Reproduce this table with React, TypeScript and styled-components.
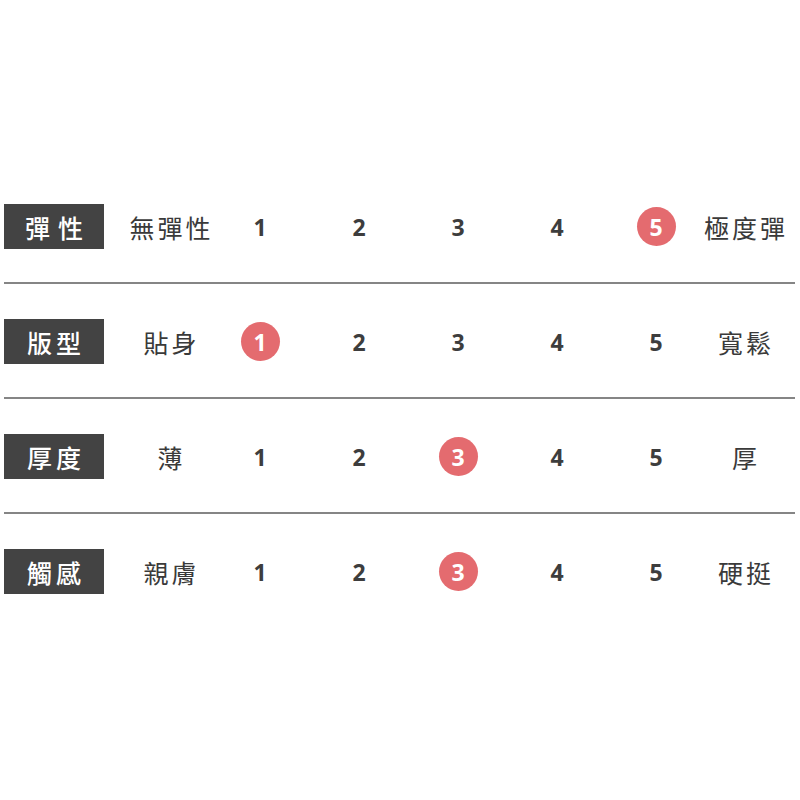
import * as React from 'react';
import styled, { createGlobalStyle } from 'styled-components';

const GlobalStyle = createGlobalStyle`
  html, body {
    margin: 0;
    padding: 0;
    background: #ffffff;
    overflow: hidden;
  }
`;

const Table = styled.div`
  display: flex;
  flex-direction: column;
  width: 800px;
  box-sizing: border-box;
  padding: 204px 5px 0 4px;
`;

const Row = styled.div`
  display: flex;
  align-items: center;
  height: 45px;
`;

const Divider = styled.div`
  height: 2px;
  background: #858585;
  margin: 33px 0 35px;
`;

const Label = styled.div<{ $spaced?: boolean }>`
  width: 100px;
  height: 45px;
  flex-shrink: 0;
  display: flex;
  align-items: center;
  justify-content: center;
  background: #434343;
  color: #ffffff;
  font-family: "Noto Sans CJK TC", "Noto Sans", sans-serif;
  font-weight: 500;
  font-size: 25px;
  letter-spacing: ${(p) => (p.$spaced ? '8px' : '4px')};
  text-indent: ${(p) => (p.$spaced ? '8px' : '4px')};
`;

const EndText = styled.div<{ $right?: boolean }>`
  width: ${(p) => (p.$right ? 'auto' : '132px')};
  flex: ${(p) => (p.$right ? '1' : '0 0 auto')};
  padding-left: ${(p) => (p.$right ? '14px' : '0')};
  text-align: center;
  color: #3a3a3a;
  font-family: "Noto Sans CJK TC", "Noto Sans", sans-serif;
  font-size: 25px;
  letter-spacing: 3px;
  text-indent: 3px;
  white-space: nowrap;
`;

const Scale = styled.div`
  display: flex;
  align-items: center;
  gap: 51px;
`;

const Step = styled.div<{ $active: boolean }>`
  width: 39px;
  height: 39px;
  margin: 0 4.5px;
  border-radius: 50%;
  display: flex;
  align-items: center;
  justify-content: center;
  background: ${(p) => (p.$active ? '#e46b6f' : 'transparent')};
  color: ${(p) => (p.$active ? '#ffffff' : '#3d3d3d')};
  font-family: "Open Sans", Lato, sans-serif;
  font-weight: 700;
  font-size: 23px;
`;

interface IRating {
  label: string;
  spaced?: boolean;
  min: string;
  max: string;
  value: number;
}

const ratings: IRating[] = [
  { label: '彈性', spaced: true, min: '無彈性', max: '極度彈', value: 5 },
  { label: '版型', min: '貼身', max: '寬鬆', value: 1 },
  { label: '厚度', min: '薄', max: '厚', value: 3 },
  { label: '觸感', min: '親膚', max: '硬挺', value: 3 },
];

export default function App() {
  return (
    <>
      <GlobalStyle />
      <Table>
        {ratings.map((r, i) => (
          <React.Fragment key={r.label}>
            {i > 0 ? <Divider /> : null}
            <Row>
              <Label $spaced={r.spaced}>{r.label}</Label>
              <EndText>{r.min}</EndText>
              <Scale>
                {[1, 2, 3, 4, 5].map((n) => (
                  <Step key={n} $active={n === r.value}>{n}</Step>
                ))}
              </Scale>
              <EndText $right>{r.max}</EndText>
            </Row>
          </React.Fragment>
        ))}
      </Table>
    </>
  );
}
